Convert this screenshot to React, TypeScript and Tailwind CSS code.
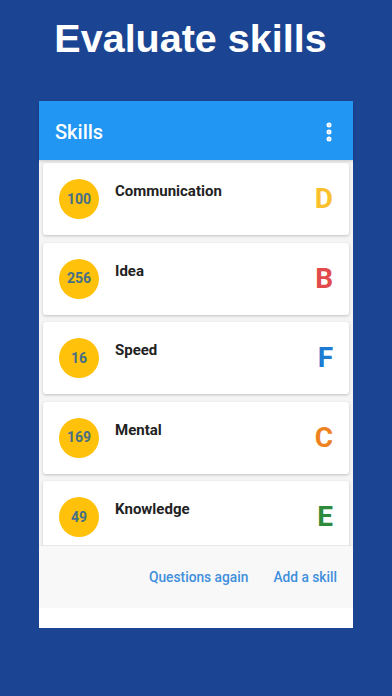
import { EllipsisVertical } from 'lucide-react';

interface Skill {
  name: string;
  score: number;
  grade: string;
  color: string;
}

const skills: Skill[] = [
  { name: 'Communication', score: 100, grade: 'D', color: 'text-[#fbc02d]' },
  { name: 'Idea', score: 256, grade: 'B', color: 'text-[#e24b4b]' },
  { name: 'Speed', score: 16, grade: 'F', color: 'text-[#1e7bd2]' },
  { name: 'Mental', score: 169, grade: 'C', color: 'text-[#ef8220]' },
  { name: 'Knowledge', score: 49, grade: 'E', color: 'text-[#2e8b3c]' },
];

function SkillCard({ skill }: { skill: Skill }) {
  return (
    <div className="flex h-[72px] shrink-0 items-center rounded-[3px] bg-white pl-4 pr-[16px] shadow-[0_1px_3px_rgba(0,0,0,0.22)]">
      <div className="flex h-10 w-10 shrink-0 items-center justify-center rounded-full bg-[#ffc10a]">
        <span className="text-[14px] font-bold text-[#456f86]">{skill.score}</span>
      </div>
      <div className="ml-4 flex-1 self-start pt-[17px] text-[15px] font-bold text-[#222]">{skill.name}</div>
      <span className={`text-[28px] font-bold leading-none ${skill.color}`}>{skill.grade}</span>
    </div>
  );
}

export default function App() {
  return (
    <div className="flex h-[696px] w-[392px] flex-col items-center bg-[#1b4592] font-['Roboto',sans-serif]">
      {/* Title */}
      <div className="flex h-[101px] items-start pt-[14px]">
        <h1 className="mr-[11px] font-['Liberation_Sans',Arial,sans-serif] text-[39.5px] font-bold leading-[48px] text-white">
          Evaluate skills
        </h1>
      </div>

      {/* Phone frame */}
      <div className="flex h-[527px] w-[314px] flex-col bg-white">
        <div className="z-10 flex h-[59px] shrink-0 items-center justify-between bg-[#2196f3] pl-4 pr-3 pt-[3px] shadow-[0_1px_3px_rgba(0,0,0,0.2)]">
          <span className="text-[20px] font-medium text-white">Skills</span>
          <EllipsisVertical className="h-6 w-6 text-white" strokeWidth={3} />
        </div>

        <div className="flex h-[385px] flex-col gap-[7.5px] overflow-hidden bg-[#f5f5f5] px-1 pt-[3px]">
          {skills.map((s) => (
            <SkillCard key={s.name} skill={s} />
          ))}
        </div>

        <div className="flex h-[63px] shrink-0 items-center justify-end gap-[25px] border-t border-[#e8e8e8] bg-[#f8f8f8] pr-4 text-[13.75px] font-medium text-[#3f8fdc]">
          <span>Questions again</span>
          <span>Add a skill</span>
        </div>
        <div className="flex-1 bg-white" />
      </div>
    </div>
  );
}
